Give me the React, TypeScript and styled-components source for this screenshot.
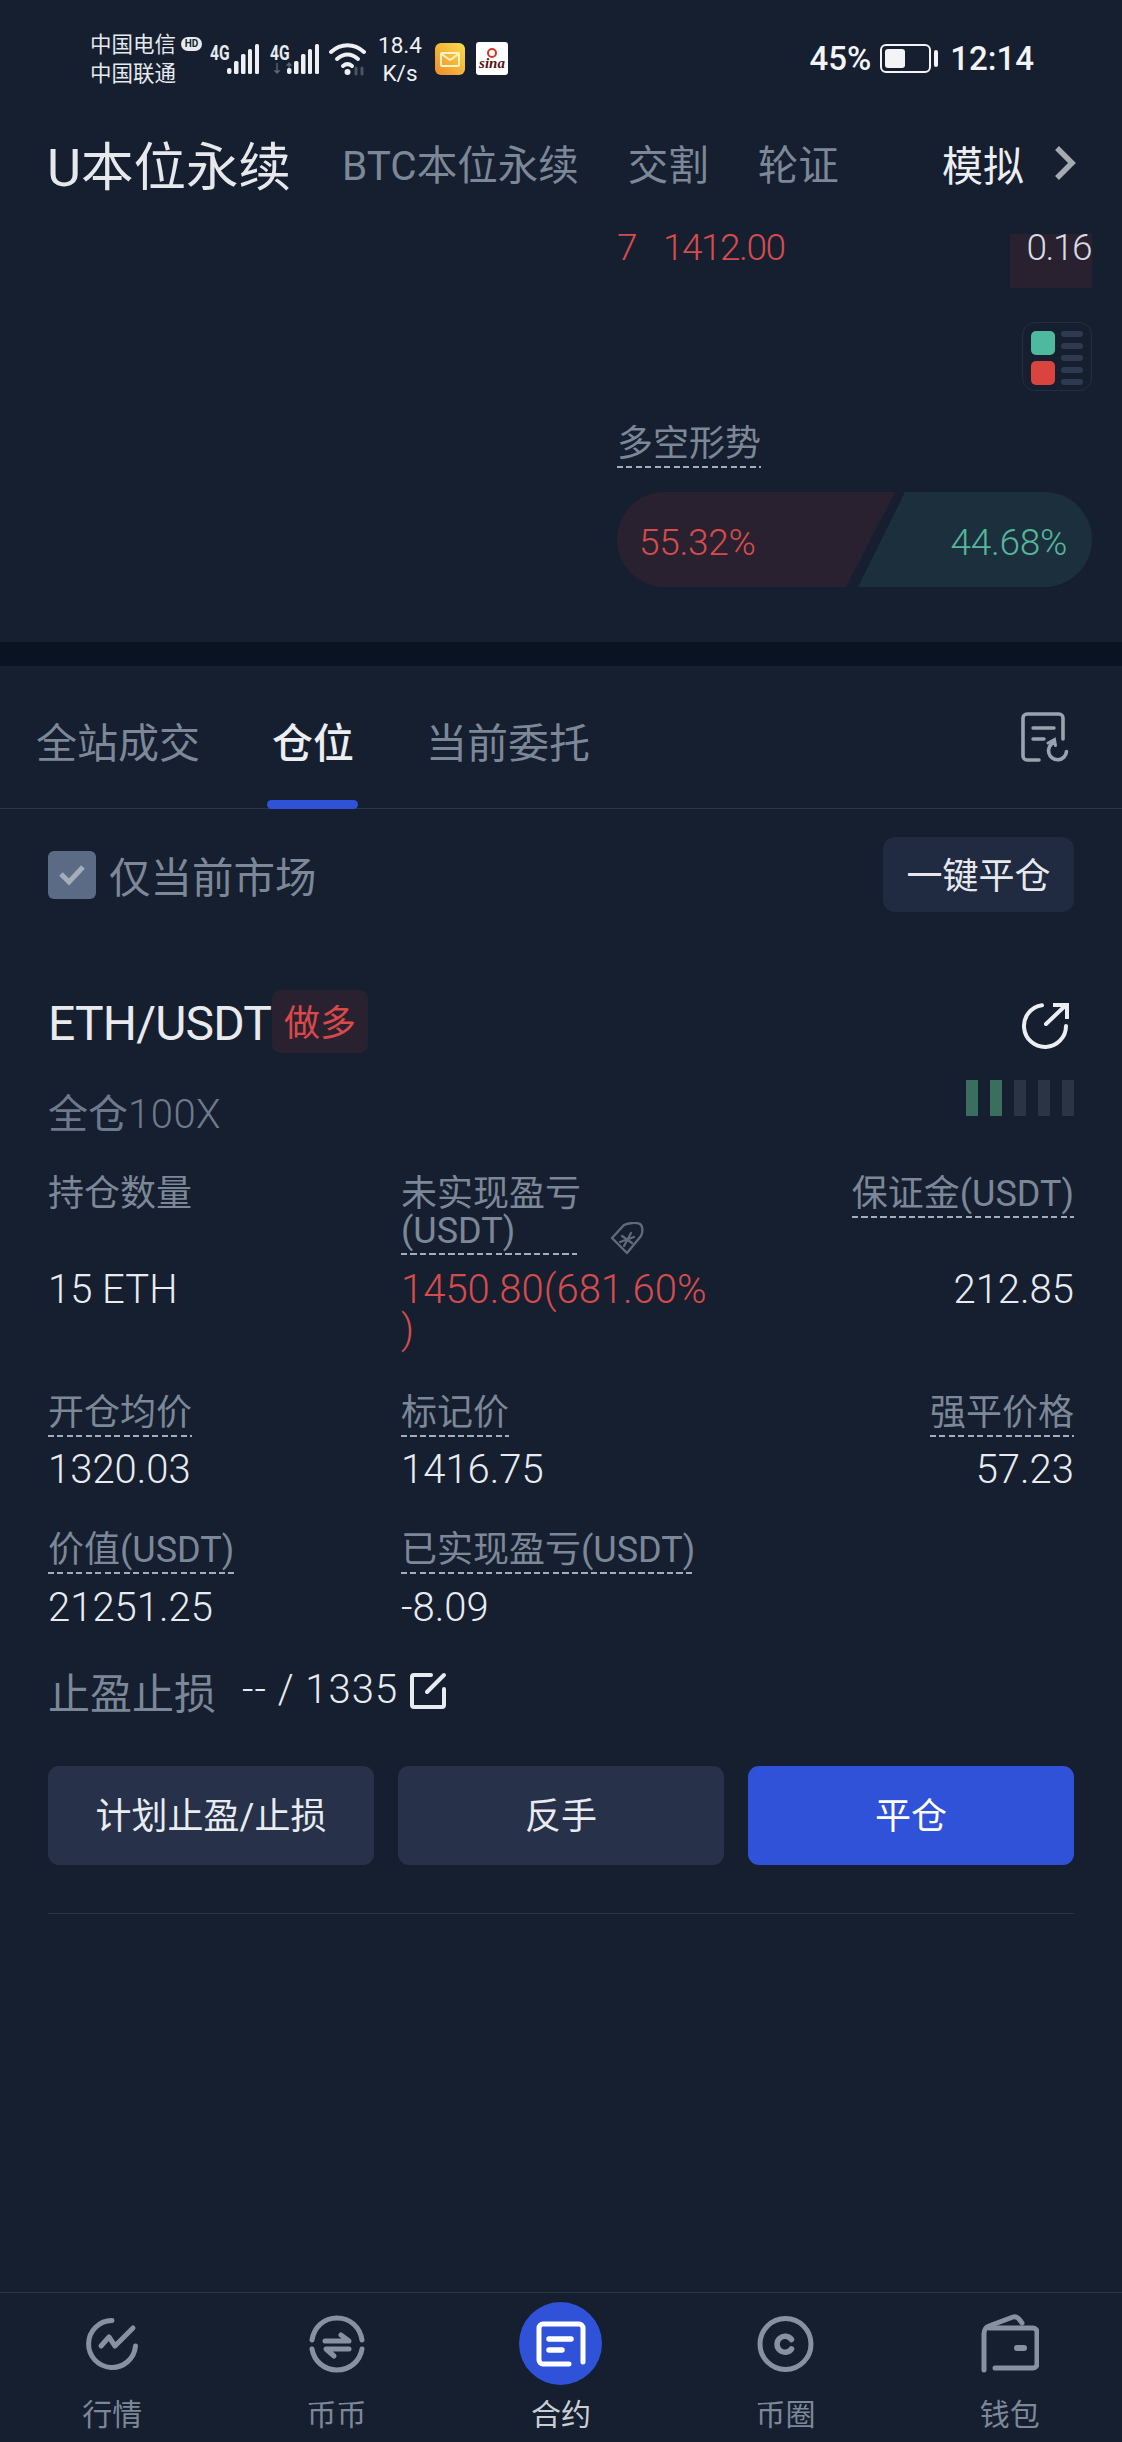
import React from "react";
import styled, { createGlobalStyle } from "styled-components";

const SANS = `Roboto, "Noto Sans CJK SC", sans-serif`;
const NUM = `Roboto, "Noto Sans CJK SC", sans-serif`;

const Global = createGlobalStyle`
  html, body { margin: 0; padding: 0; background: #151f2f; }
  * { box-sizing: border-box; }
`;

const Page = styled.div`
  width: 1122px;
  height: 2442px;
  overflow: hidden;
  display: flex;
  flex-direction: column;
  background: #151f2f;
  font-family: ${SANS};
  color: #e4e6ea;
`;

/* ---------- status bar ---------- */
const StatusBar = styled.div`
  height: 110px;
  flex: none;
  padding: 0 88px 0 90px;
  display: flex;
  align-items: center;
  justify-content: space-between;
`;
const StatusLeft = styled.div`
  display: flex;
  align-items: center;
  margin-top: 7px;
`;
const Carrier = styled.div`
  position: relative;
  width: 91px;
  font-size: 21.5px;
  line-height: 29px;
  color: #e6e9ee;
  white-space: nowrap;
`;
const HdBadge = styled.span`
  position: absolute;
  left: 91px;
  top: 7px;
  width: 21px;
  height: 14px;
  border-radius: 7px;
  background: #e6e9ee;
  color: #151f2f;
  font: 700 10px/14px ${SANS};
  text-align: center;
`;
const Speed = styled.div`
  width: 44px;
  margin: 0 13px 0 11px;
  font: 400 22.5px/28px ${NUM};
  text-align: center;
  color: #eef0f3;
  white-space: nowrap;
`;
const StatusRight = styled.div`
  display: flex;
  align-items: center;
  margin-top: 7px;
  font: 500 33px/40px ${NUM};
  color: #f2f4f6;
`;
const SignalBox = styled.svg<{ $left: number }>`
  display: block;
  flex: none;
  overflow: visible;
  margin-left: ${(p) => p.$left}px;
`;
const SmallIcon = styled.svg`
  display: block;
  flex: none;
`;
const WifiIcon = styled(SmallIcon)`
  margin-left: 9px;
`;
const SinaBox = styled.div`
  width: 32px;
  height: 33px;
  margin-left: 11px;
  border-radius: 3px;
  background: #fff;
  display: flex;
  flex-direction: column;
  align-items: center;
  justify-content: center;
  color: #5a1010;
  font: italic 700 15px/12px "Liberation Serif", serif;
`;
const SinaEye = styled.span`
  width: 10px;
  height: 10px;
  border-radius: 50%;
  border: 2px solid #d9322b;
  margin-bottom: -1px;
`;
const Battery = styled.div`
  width: 51px;
  height: 29px;
  margin: 0 3px 0 9px;
  padding: 3px;
  border: 2px solid #f2f4f6;
  border-radius: 6px;
`;
const BatteryFill = styled.div`
  width: 20px;
  height: 100%;
  border-radius: 3px;
  background: #f2f4f6;
`;
const BatteryCap = styled.div`
  width: 4px;
  height: 17px;
  margin-right: 12px;
  border-radius: 2px;
  background: #f2f4f6;
`;

/* ---------- market header ---------- */
const MarketBar = styled.div`
  height: 112px;
  flex: none;
  padding: 0 46px 7px 47px;
  display: flex;
  align-items: center;
`;
const MarketTitle = styled.div`
  font-size: 52.5px;
  font-weight: 400;
  color: #e6e8eb;
  margin-right: 51px;
  white-space: nowrap;
`;
const MarketTab = styled.div`
  font-size: 40.5px;
  color: #7c8797;
  margin-right: 49px;
  white-space: nowrap;
`;
const DemoTab = styled.div`
  margin-left: auto;
  margin-right: 30px;
  font-size: 41px;
  font-weight: 400;
  color: #eceef1;
`;

/* ---------- chart panel ---------- */
const ChartPanel = styled.div`
  height: 420px;
  flex: none;
  padding: 12px 30px 0 617px;
  display: flex;
  flex-direction: column;
`;
const OrderRow = styled.div`
  display: flex;
  height: 54px;
  font: 300 37px/28px ${NUM};
  letter-spacing: -1.5px;
  color: #d64c4d;
`;
const OrderNum = styled.span`
  width: 46px;
`;
const DepthCell = styled.div`
  margin-left: auto;
  width: 82px;
  background: #2a2130;
  text-align: right;
  color: #d8dce2;
  padding-right: 1px;
  white-space: nowrap;
`;
const BookToggle = styled.div`
  align-self: flex-end;
  width: 70px;
  height: 69px;
  margin-top: 34px;
  padding: 8px;
  border: 1px solid #232e41;
  border-radius: 13px;
  display: grid;
  grid-template-columns: 24px 1fr;
  column-gap: 6px;
`;
const BookSquares = styled.div`
  display: flex;
  flex-direction: column;
  gap: 6px;
`;
const BookSquare = styled.div<{ $color: string }>`
  height: 24px;
  border-radius: 5px;
  background: ${(p) => p.$color};
`;
const BookLines = styled.div`
  display: flex;
  flex-direction: column;
  justify-content: space-between;
`;
const BookLine = styled.div`
  height: 6px;
  border-radius: 3px;
  background: #2e3a50;
`;
const TrendLabel = styled.div`
  align-self: flex-start;
  margin-top: 33px;
`;
const Pill = styled.div`
  margin-top: 24px;
  height: 95px;
  position: relative;
  border-radius: 48px;
  overflow: hidden;
  display: flex;
  font: 300 37px/102px ${NUM};
  letter-spacing: -0.3px;
`;
const PillLong = styled.div`
  width: 278px;
  padding-left: 22px;
  background: #2a2130;
  color: #d64c4d;
  clip-path: polygon(0 0, 100% 0, 229px 100%, 0 100%);
`;
const PillShort = styled.div`
  flex: 1;
  margin-left: -37px;
  padding-right: 25px;
  text-align: right;
  background: #1b303c;
  color: #55b69c;
  clip-path: polygon(47px 0, 100% 0, 100% 100%, 0 100%);
`;

const Band = styled.div`
  height: 24px;
  flex: none;
  background: #0a1322;
`;

/* ---------- tabs ---------- */
const TabsBar = styled.div`
  height: 143px;
  flex: none;
  padding: 0 53px 0 36px;
  display: flex;
  border-bottom: 1px solid #2c3645;
`;
const Tab = styled.div<{ $active?: boolean }>`
  position: relative;
  height: 100%;
  margin-right: 72px;
  padding-top: 50px;
  font-size: 41px;
  line-height: 56px;
  white-space: nowrap;
  font-weight: ${(p) => (p.$active ? 500 : 400)};
  color: ${(p) => (p.$active ? "#eceef1" : "#7c8797")};
  ${(p) =>
    p.$active &&
    `&::after {
      content: "";
      position: absolute;
      left: -5px;
      right: -4px;
      bottom: -1px;
      height: 9px;
      border-radius: 5px;
      background: #2f52d8;
    }`}
`;
const TabsIcon = styled.svg`
  margin: 46px 0 0 auto;
  display: block;
`;

/* ---------- filter row ---------- */
const FilterRow = styled.div`
  flex: none;
  margin-top: 28px;
  height: 75px;
  padding: 0 48px;
  display: flex;
  align-items: center;
`;
const CheckBox = styled.div`
  width: 48px;
  height: 48px;
  margin: 0 13px 0 0;
  border-radius: 6px;
  background: #5c6b85;
  display: flex;
  align-items: center;
  justify-content: center;
`;
const FilterLabel = styled.div`
  font-size: 41.5px;
  color: #7c8797;
  white-space: nowrap;
`;
const CloseAllBtn = styled.div`
  margin-left: auto;
  width: 191px;
  height: 75px;
  padding-top: 6px;
  border-radius: 12px;
  background: #202a40;
  font-size: 36px;
  line-height: 69px;
  text-align: center;
  color: #e6e8ec;
`;

/* ---------- position ---------- */
const Position = styled.div`
  flex: none;
  padding: 0 48px;
`;
const PosHead = styled.div`
  margin-top: 78px;
  height: 63px;
  display: flex;
  align-items: center;
`;
const PosSymbol = styled.div`
  width: 224px;
  padding-top: 4px;
  font: 400 48px/59px ${SANS};
  letter-spacing: -0.8px;
  color: #e8eaed;
  white-space: nowrap;
`;
const SideBadge = styled.div`
  width: 96px;
  height: 63px;
  padding-top: 6px;
  border-radius: 9px;
  background: #2a2130;
  color: #d9494a;
  font-size: 36px;
  line-height: 57px;
  text-align: center;
`;
const ShareIcon = styled.svg`
  margin: 8px 5px 0 auto;
  display: block;
`;
const MetaRow = styled.div`
  height: 52px;
  margin-top: 36px;
  display: flex;
  align-items: flex-start;
  justify-content: space-between;
  font-size: 40px;
  line-height: 52px;
  color: #6e7a8c;
`;
const Leverage = styled.div`
  white-space: nowrap;
`;
const LeverageNum = styled.span`
  font-weight: 300;
  letter-spacing: 0.5px;
`;
const Levels = styled.div`
  display: flex;
  gap: 12px;
  margin-top: -9px;
`;
const Level = styled.div<{ $on?: boolean }>`
  width: 12px;
  height: 36px;
  background: ${(p) => (p.$on ? "#3a6e5e" : "#2a3444")};
`;

const Grid = styled.div<{ $top: number }>`
  display: grid;
  grid-template-columns: 353px 1fr auto;
  margin-top: ${(p) => p.$top}px;
`;
const Cell = styled.div<{ $right?: boolean }>`
  position: relative;
  display: flex;
  align-items: flex-start;
  justify-content: ${(p) => (p.$right ? "flex-end" : "flex-start")};
  min-width: 0;
`;
const Plain = styled.div`
  padding-top: 2px;
  font-size: 36px;
  line-height: 37px;
  color: #7c8797;
  white-space: nowrap;
`;
const Dashed = styled(Plain)`
  padding-bottom: 5px;
  background: repeating-linear-gradient(90deg, #a4adba 0 6px, transparent 6px 9.5px) left bottom / 100% 2px no-repeat;
`;
const WrapLabel = styled(Dashed)`
  width: 176px;
`;
const TagIcon = styled.svg`
  position: absolute;
  left: 209px;
  top: 48px;
`;
const ValueCell = styled(Cell)`
  height: 88px;
`;
const ValueShort = styled(Cell)`
  height: 44px;
`;
const Value = styled.div<{ $red?: boolean }>`
  font: 300 40px/44px ${NUM};
  color: ${(p) => (p.$red ? "#d64c4d" : "#e8ebef")};
  ${(p) => p.$red && "line-height: 40px; padding-top: 2px;"}
`;

const TpRow = styled.div`
  margin-top: 38px;
  height: 44px;
  display: flex;
  align-items: center;
`;
const TpLabel = styled.div`
  font-size: 42px;
  color: #7c8797;
  white-space: nowrap;
`;
const TpValue = styled.div`
  margin: 0 12px 0 26px;
  font: 300 40px/44px ${NUM};
  letter-spacing: 1px;
  color: #e8ebef;
  white-space: nowrap;
`;
const Actions = styled.div`
  margin-top: 54px;
  display: grid;
  grid-template-columns: repeat(3, 1fr);
  gap: 24px;
`;
const ActionBtn = styled.div<{ $primary?: boolean }>`
  height: 99px;
  padding-top: 4px;
  border-radius: 11px;
  background: ${(p) => (p.$primary ? "#2f52d8" : "#27324a")};
  color: ${(p) => (p.$primary ? "#fff" : "#e8ebef")};
  font-size: 36px;
  line-height: 95px;
  text-align: center;
  white-space: nowrap;
`;
const Rule = styled.div`
  margin-top: 48px;
  height: 1px;
  background: #283344;
`;

/* ---------- bottom nav ---------- */
const BottomNav = styled.div`
  margin-top: auto;
  height: 150px;
  flex: none;
  display: grid;
  grid-template-columns: repeat(5, 1fr);
  border-top: 1px solid #2c3645;
`;
const NavItem = styled.div`
  display: flex;
  flex-direction: column;
  align-items: center;
`;
const NavIconBox = styled.div`
  height: 83px;
  margin-top: 9px;
  display: flex;
  align-items: center;
  justify-content: center;
`;
const ActiveCircle = styled.div`
  width: 83px;
  height: 83px;
  border-radius: 50%;
  background: #2f52d8;
  display: flex;
  align-items: center;
  justify-content: center;
`;
const NavLabel = styled.div<{ $active?: boolean }>`
  margin-top: 10px;
  font-size: 30px;
  line-height: 40px;
  color: ${(p) => (p.$active ? "#c9ced6" : "#7c8797")};
`;

const NavSvg = styled.svg`
  display: block;
`;

const Bars = () => (
  <g fill="#eef0f3">
    <rect x="0" y="24" width="4.5" height="6" rx="2" />
    <rect x="7" y="17" width="4.5" height="13" rx="1.5" />
    <rect x="14" y="10" width="4.5" height="20" rx="1.5" />
    <rect x="21" y="5" width="4" height="25" rx="1.5" />
    <rect x="28" y="0" width="4" height="30" rx="1.5" />
  </g>
);

const Signal = ({ arrows, left }: { arrows?: boolean; left: number }) => (
  <SignalBox $left={left} width="50" height="32" viewBox="0 0 50 32">
    <text transform="translate(0 17) scale(0.78 1)" fontFamily={SANS} fontWeight="700" fontSize="20" fill="#e6e9ee">
      4G
    </text>
    {arrows && (
      <text x="1" y="30" fontFamily={SANS} fontWeight="700" fontSize="12" fill="#5f6877">
        ↓↑
      </text>
    )}
    <g transform="translate(17 1)">
      <Bars />
    </g>
  </SignalBox>
);

const Wifi = () => (
  <WifiIcon width="38" height="34" viewBox="0 0 38 34" fill="none" stroke="#eef0f3" strokeWidth="4" strokeLinecap="round">
    <path d="M2 10C12 1 25 1 35 10" />
    <path d="M8 17c7-6 14-6 21 0" />
    <path d="M14 24c3-2.5 6-2.5 9 0" />
    <circle cx="18.5" cy="30" r="3" fill="#eef0f3" stroke="none" />
    <path d="M27 26v6M33 26v6" stroke="#4b5464" strokeWidth="3" />
  </WifiIcon>
);

const Mail = () => (
  <SmallIcon width="30" height="32" viewBox="0 0 30 32">
    <defs>
      <linearGradient id="mailGrad" x1="0" y1="1" x2="1" y2="0">
        <stop offset="0" stopColor="#f08a2c" />
        <stop offset="1" stopColor="#f6e04a" />
      </linearGradient>
    </defs>
    <rect width="30" height="32" rx="6" fill="url(#mailGrad)" />
    <rect x="6" y="10" width="18" height="13" rx="1" fill="none" stroke="#fff3c0" strokeWidth="2" />
    <path d="M6.5 11l8.5 6 8.500-6" fill="none" stroke="#fff3c0" strokeWidth="2" />
  </SmallIcon>
);

const DocRefresh = () => (
  <TabsIcon width="48" height="51" viewBox="0 0 48 51" fill="none" stroke="#99a2af" strokeWidth="3.6" strokeLinecap="round">
    <path d="M18 48H6a4 4 0 0 1-4-4V6a4 4 0 0 1 4-4h32a4 4 0 0 1 4 4v21" />
    <path d="M12 16h21M12 27h11" strokeWidth="3.4" />
    <path d="M33 30.500a9 9 0 1 0 12.500 9" />
    <path d="M27 31l6.500-3.500 1 6" strokeWidth="3" />
  </TabsIcon>
);

const Tag = () => (
  <TagIcon width="35" height="34" viewBox="0 0 35 34" fill="none" stroke="#5f6a7b" strokeWidth="2.4" strokeLinejoin="round" strokeLinecap="round">
    <path d="M2 16L14 3c4-2 12-3 16-1 3 2 3 8 1 12L17 31z" />
    <path d="M12 14l10 7M21 11l-7 13M10 20l14-5" strokeWidth="2.2" />
  </TagIcon>
);

const Share = () => (
  <ShareIcon width="47" height="47" viewBox="0 0 47 47" fill="none" stroke="#eceef1" strokeWidth="4" strokeLinecap="round">
    <path d="M20 3.200A21 21 0 1 0 44 24" />
    <path d="M24 22L44 3" />
    <path d="M31 3h14v14" strokeLinecap="butt" />
  </ShareIcon>
);

const EditIcon = () => (
  <SmallIcon width="37" height="37" viewBox="0 0 37 37" fill="none" stroke="#e8ebef" strokeWidth="4" strokeLinecap="round">
    <path d="M21 3H4a2 2 0 0 0-2 2v28a2 2 0 0 0 2 2h28a2 2 0 0 0 2-2V17" />
    <path d="M17 20L34 3" />
  </SmallIcon>
);

const IconMarket = () => (
  <NavSvg width="54" height="54" viewBox="0 0 54 54" fill="none" stroke="#8791a2" strokeWidth="5" strokeLinecap="round" strokeLinejoin="round">
    <path d="M27 3.500A23.500 23.500 0 1 0 50.500 29" />
    <path d="M16 29l8-9 6 9L48 11" />
  </NavSvg>
);
const IconSwap = () => (
  <NavSvg width="56" height="58" viewBox="0 0 56 58" fill="none" stroke="#8791a2" strokeWidth="5" strokeLinecap="round" strokeLinejoin="round">
    <path d="M3 25C5 12 15 3 28 3s23 9 25 22" />
    <path d="M3 34c2 12 12 21 25 21s23-9 25-21" />
    <path d="M16 26h24l-8-6" />
    <path d="M40 34H17l8 7" />
  </NavSvg>
);
const IconContract = () => (
  <NavSvg width="50" height="46" viewBox="0 0 50 46" fill="none" stroke="#fff" strokeWidth="5" strokeLinecap="round">
    <path d="M33 43H7a4 4 0 0 1-4-4V7a4 4 0 0 1 4-4h36a4 4 0 0 1 4 4v34" />
    <path d="M13 18h22M13 29h13" strokeWidth="5.500" />
  </NavSvg>
);
const IconCircle = () => (
  <NavSvg width="57" height="58" viewBox="0 0 57 58" fill="none" stroke="#8791a2" strokeWidth="5" strokeLinecap="round">
    <circle cx="28.500" cy="29" r="25.500" />
    <path d="M34.500 24.500a8 8 0 1 0 0 9.500" strokeWidth="5.500" />
  </NavSvg>
);
const IconWallet = () => (
  <NavSvg width="58" height="60" viewBox="0 0 58 60" fill="none" stroke="#8791a2" strokeWidth="5" strokeLinecap="round" strokeLinejoin="round">
    <path d="M3 56V20c0-4 2-7 5-8L32 3c3-1 6 1 9 6" />
    <path d="M8 14h44a4 4 0 0 1 4 4v32a4 4 0 0 1-4 4H14" />
    <path d="M36 34h7" strokeWidth="6" />
  </NavSvg>
);

const NAV = [
  { label: "行情", icon: <IconMarket /> },
  { label: "币币", icon: <IconSwap /> },
  { label: "合约", icon: <ActiveCircle><IconContract /></ActiveCircle>, active: true },
  { label: "币圈", icon: <IconCircle /> },
  { label: "钱包", icon: <IconWallet /> },
];

export default function App() {
  return (
    <Page>
      <Global />
      <StatusBar>
        <StatusLeft>
          <Carrier>
            中国电信<HdBadge>HD</HdBadge>
            <br />
            中国联通
          </Carrier>
          <Signal left={29} />
          <Signal left={10} arrows />
          <Wifi />
          <Speed>
            18.4
            <br />
            K/s
          </Speed>
          <Mail />
          <SinaBox>
            <SinaEye />
            sina
          </SinaBox>
        </StatusLeft>
        <StatusRight>
          45%
          <Battery>
            <BatteryFill />
          </Battery>
          <BatteryCap />
          12:14
        </StatusRight>
      </StatusBar>

      <MarketBar>
        <MarketTitle>U本位永续</MarketTitle>
        <MarketTab>BTC本位永续</MarketTab>
        <MarketTab>交割</MarketTab>
        <MarketTab>轮证</MarketTab>
        <DemoTab>模拟</DemoTab>
        <svg width="22" height="36" viewBox="0 0 22 36" fill="none" stroke="#a5a9b0" strokeWidth="5.500">
          <path d="M3 3l15 15L3 33" />
        </svg>
      </MarketBar>

      <ChartPanel>
        <OrderRow>
          <OrderNum>7</OrderNum>
          <span>1412.00</span>
          <DepthCell>0.16</DepthCell>
        </OrderRow>
        <BookToggle>
          <BookSquares>
            <BookSquare $color="#4fb99f" />
            <BookSquare $color="#d9443f" />
          </BookSquares>
          <BookLines>
            <BookLine />
            <BookLine />
            <BookLine />
            <BookLine />
            <BookLine />
          </BookLines>
        </BookToggle>
        <TrendLabel>
          <Dashed>多空形势</Dashed>
        </TrendLabel>
        <Pill>
          <PillLong>55.32%</PillLong>
          <PillShort>44.68%</PillShort>
        </Pill>
      </ChartPanel>

      <Band />

      <TabsBar>
        <Tab>全站成交</Tab>
        <Tab $active>仓位</Tab>
        <Tab>当前委托</Tab>
        <DocRefresh />
      </TabsBar>

      <FilterRow>
        <CheckBox>
          <svg width="28" height="24" viewBox="0 0 28 24" fill="none" stroke="#a4adb8" strokeWidth="5">
            <path d="M3 11l8 8L25 4" />
          </svg>
        </CheckBox>
        <FilterLabel>仅当前市场</FilterLabel>
        <CloseAllBtn>一键平仓</CloseAllBtn>
      </FilterRow>

      <Position>
        <PosHead>
          <PosSymbol>ETH/USDT</PosSymbol>
          <SideBadge>做多</SideBadge>
          <Share />
        </PosHead>
        <MetaRow>
          <Leverage>
            全仓<LeverageNum>100X</LeverageNum>
          </Leverage>
          <Levels>
            <Level $on />
            <Level $on />
            <Level />
            <Level />
            <Level />
          </Levels>
        </MetaRow>

        <Grid $top={33}>
          <Cell>
            <Plain>持仓数量</Plain>
          </Cell>
          <Cell>
            <WrapLabel>
              未实现盈亏
              <br />
              (USDT)
            </WrapLabel>
            <Tag />
          </Cell>
          <Cell $right>
            <Dashed>保证金(USDT)</Dashed>
          </Cell>
        </Grid>
        <Grid $top={13}>
          <ValueCell>
            <Value>15 ETH</Value>
          </ValueCell>
          <ValueCell>
            <Value $red>
              1450.80(681.60%
              <br />)
            </Value>
          </ValueCell>
          <ValueCell $right>
            <Value>212.85</Value>
          </ValueCell>
        </Grid>

        <Grid $top={37}>
          <Cell>
            <Dashed>开仓均价</Dashed>
          </Cell>
          <Cell>
            <Dashed>标记价</Dashed>
          </Cell>
          <Cell $right>
            <Dashed>强平价格</Dashed>
          </Cell>
        </Grid>
        <Grid $top={11}>
          <ValueShort>
            <Value>1320.03</Value>
          </ValueShort>
          <ValueShort>
            <Value>1416.75</Value>
          </ValueShort>
          <ValueShort $right>
            <Value>57.23</Value>
          </ValueShort>
        </Grid>

        <Grid $top={38}>
          <Cell>
            <Dashed>价值(USDT)</Dashed>
          </Cell>
          <Cell>
            <Dashed>已实现盈亏(USDT)</Dashed>
          </Cell>
          <Cell />
        </Grid>
        <Grid $top={12}>
          <ValueShort>
            <Value>21251.25</Value>
          </ValueShort>
          <ValueShort>
            <Value>-8.09</Value>
          </ValueShort>
          <ValueShort />
        </Grid>

        <TpRow>
          <TpLabel>止盈止损</TpLabel>
          <TpValue>-- / 1335</TpValue>
          <EditIcon />
        </TpRow>

        <Actions>
          <ActionBtn>计划止盈/止损</ActionBtn>
          <ActionBtn>反手</ActionBtn>
          <ActionBtn $primary>平仓</ActionBtn>
        </Actions>
        <Rule />
      </Position>

      <BottomNav>
        {NAV.map((n) => (
          <NavItem key={n.label}>
            <NavIconBox>{n.icon}</NavIconBox>
            <NavLabel $active={n.active}>{n.label}</NavLabel>
          </NavItem>
        ))}
      </BottomNav>
    </Page>
  );
}
